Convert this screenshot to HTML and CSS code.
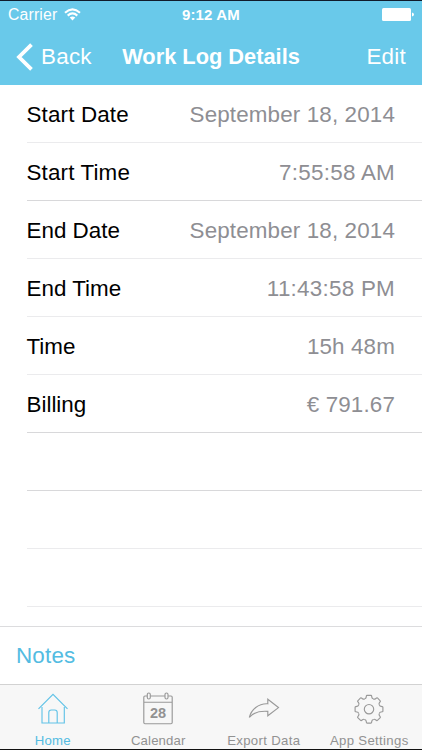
FILE: index.html
```
<!DOCTYPE html>
<html lang="en">
<head>
<meta charset="utf-8">
<title>Work Log Details</title>
<link rel="stylesheet" href="styles.css">
</head>
<body>
<div class="app">
  <header class="header">
    <div class="status">
      <div class="carrier"><span>Carrier</span>
        <svg class="wifi" width="17" height="13" viewBox="0 0 17 13" fill="none" stroke="#fff" stroke-width="2.1"><path d="M1 4.8Q8.5-1.9 16 4.8M3.7 7.6Q8.5 3.3 13.3 7.6"/><path d="M5.7 9.6Q8.5 7.3 11.3 9.6L8.5 12.4Z" fill="#fff" stroke="none"/></svg>
      </div>
      <span class="clock">9:12 AM</span>
      <svg class="battery" width="32" height="13" viewBox="0 0 32 13" fill="#fff"><rect width="29" height="13" rx="1.5"/><path d="M30 4.5Q32 5 32 6.5T30 8.5Z"/></svg>
    </div>
    <nav class="nav">
      <div class="back"><svg width="18" height="28" viewBox="0 0 18 28" fill="none" stroke="#fff" stroke-width="3.8"><path d="M15.5 1.6 3 14 15.5 26.4"/></svg><span>Back</span></div>
      <h1>Work Log Details</h1>
      <span class="edit">Edit</span>
    </nav>
  </header>
  <main class="list">
    <div class="row"><span class="label">Start Date</span><span class="value date">September 18, 2014</span></div>
    <div class="row strong"><span class="label">Start Time</span><span class="value time">7:55:58 AM</span></div>
    <div class="row"><span>End Date</span><span class="value date">September 18, 2014</span></div>
    <div class="row"><span>End Time</span><span class="value time">11:43:58 PM</span></div>
    <div class="row"><span>Time</span><span class="value date">15h 48m</span></div>
    <div class="row strong"><span>Billing</span><span class="value date">€ 791.67</span></div>
    <div class="row strong"></div>
    <div class="row"></div>
    <div class="row"></div>
  </main>
  <section class="notes"><span>Notes</span></section>
  <footer class="tabs">
    <div class="tab active">
      <svg width="34" height="34" viewBox="0 0 34 34"><path d="M2.5 16.8 17 2.3 31.5 16.8M6 15V31H12.8V20.5Q12.8 18 15.3 18H18.7Q21.2 18 21.2 20.5V31H28.3V15M12.8 31H21.2"/></svg>
      <span>Home</span>
    </div>
    <div class="tab">
      <svg width="34" height="34" viewBox="0 0 34 34"><path d="M6 4H4Q2.8 4 2.8 5.2V30.5Q2.8 31.7 4 31.7H30Q31.2 31.7 31.2 30.5V5.2Q31.2 4 30 4H27.2M9.5 4H24M2.8 10.2H31.2"/><rect x="6.3" y="1" width="3" height="6" rx="1.5"/><rect x="24" y="1" width="3" height="6" rx="1.5"/><text x="17" y="26" text-anchor="middle">28</text></svg>
      <span>Calendar</span>
    </div>
    <div class="tab">
      <svg width="34" height="34" viewBox="0 0 34 34"><path d="M2.3 25.5C4.3 17.5 11.3 11.3 20.8 11.8V7.2L31.5 15.6 20.8 23.8V19.4C12.5 18.8 6.4 20.3 2.3 25.5Z"/></svg>
      <span class="wide">Export Data</span>
    </div>
    <div class="tab">
      <svg width="34" height="34" viewBox="-17 -17.2 34 34"><defs><path id="tooth" d="M-4.3-10.4Q-3-10.6-2.8-12L-2.6-13.3Q-2.5-13.9-2-13.9H2Q2.5-13.9 2.6-13.3L2.8-12Q3-10.6 4.3-10.4"/></defs><use href="#tooth"/><use href="#tooth" transform="rotate(45)"/><use href="#tooth" transform="rotate(90)"/><use href="#tooth" transform="rotate(135)"/><use href="#tooth" transform="rotate(180)"/><use href="#tooth" transform="rotate(225)"/><use href="#tooth" transform="rotate(270)"/><use href="#tooth" transform="rotate(315)"/><circle r="4.7"/></svg>
      <span class="wide">App Settings</span>
    </div>
  </footer>
</div>
</body>
</html>
```
FILE: styles.css
```
* { box-sizing: border-box; }
body { margin: 0; font-family: "Liberation Sans", Arial, sans-serif; }
.app {
  display: flex;
  flex-direction: column;
  width: 422px;
  height: 750px;
  overflow: hidden;
  background: #fff;
  border-top: 1px solid #101b2b;
  border-bottom: 1px solid #111;
}
.header { flex: none; height: 84px; background: #69c9ea; color: #fff; }
.status {
  display: grid;
  grid-template-columns: 1fr auto 1fr;
  align-items: center;
  height: 27px;
  padding: 0 8px;
  font-size: 15.8px;
}
.carrier { display: flex; align-items: center; gap: 7px; letter-spacing: 0.15px; }
.clock { font-weight: bold; font-size: 15px; letter-spacing: 0.15px; }
.battery { justify-self: end; }
.nav {
  display: grid;
  grid-template-columns: 1fr auto 1fr;
  align-items: center;
  height: 57px;
  padding: 1px 16px 0;
  font-size: 22.4px;
}
.nav h1 { margin: 0; font-size: 21.8px; font-weight: bold; }
.back { display: flex; align-items: center; gap: 7px; letter-spacing: 0.25px; }
.edit { justify-self: end; letter-spacing: 0.25px; }
.list { flex: none; height: 541px; padding-left: 26.5px; overflow: hidden; }
.row {
  display: flex;
  align-items: center;
  justify-content: space-between;
  height: 58px;
  padding: 3px 27px 0 0;
  border-bottom: 1px solid #ebebed;
  font-size: 22.4px;
  white-space: nowrap;
}
.strong { border-bottom-color: #d8d8da; }
.label { letter-spacing: 0.15px; }
.value { color: #8e8e93; }
.date { letter-spacing: 0.14px; }
.time { letter-spacing: 0.26px; }
.notes {
  flex: none;
  display: flex;
  align-items: center;
  height: 58px;
  padding: 1px 16px 0;
  border-top: 1px solid #dcdcde;
  color: #53bce2;
  font-size: 22.4px;
  letter-spacing: 0.2px;
}
.tabs {
  flex: 1;
  display: grid;
  grid-template-columns: repeat(4, 105.5px);
  background: #f7f7f7;
  border-top: 1px solid #d2d2d2;
  color: #929292;
}
.tab {
  display: flex;
  flex-direction: column;
  align-items: center;
  padding-top: 7px;
  font-size: 13.2px;
  line-height: 16px;
  letter-spacing: 0.15px;
  white-space: nowrap;
}
.wide { letter-spacing: 0.32px; }
.tab svg { flex: none; margin-bottom: 7px; fill: none; stroke: #999; stroke-width: 1.15; }
.tab text { font: bold 14.5px "Liberation Sans", Arial, sans-serif; letter-spacing: 0; fill: #929292; stroke: none; }
.active { color: #53bce2; }
.active svg { stroke: #62c3e7; }
```
